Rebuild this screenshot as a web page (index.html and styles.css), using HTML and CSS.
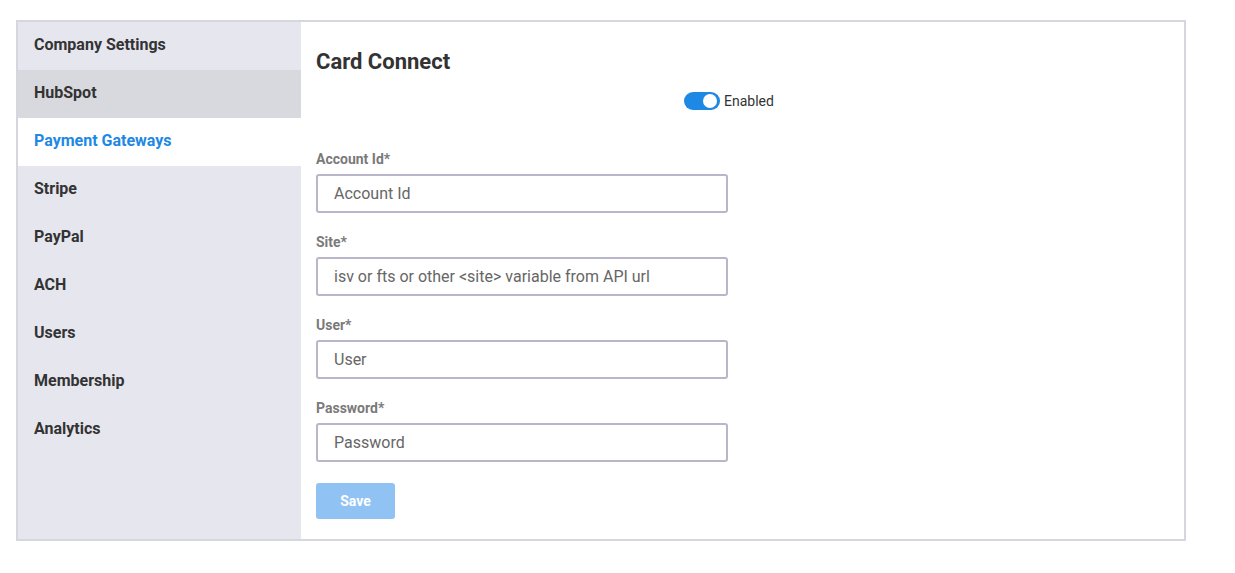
FILE: index.html
```html
<!DOCTYPE html>
<html lang="en">
<head>
	<meta charset="UTF-8">
	<title>Settings - Payment Gateways</title>
	<link rel="stylesheet" href="styles.css">
</head>
<body>
	<div class="settings">
		<ul class="side-nav">
			<li>Company Settings</li>
			<li class="hover">HubSpot</li>
			<li class="active">Payment Gateways</li>
			<li>Stripe</li>
			<li>PayPal</li>
			<li>ACH</li>
			<li>Users</li>
			<li>Membership</li>
			<li>Analytics</li>
		</ul>
		<div class="panel">
			<h2 class="panel-title">Card Connect</h2>
			<label class="switch-row">
				<span class="switch"><span class="knob"></span></span>
				<span class="switch-text">Enabled</span>
			</label>
			<form class="gateway-form">
				<div class="field">
					<label class="field-label">Account Id*</label>
					<input class="field-input" type="text" placeholder="Account Id">
				</div>
				<div class="field">
					<label class="field-label">Site*</label>
					<input class="field-input" type="text" placeholder="isv or fts or other <site> variable from API url">
				</div>
				<div class="field">
					<label class="field-label">User*</label>
					<input class="field-input" type="text" placeholder="User">
				</div>
				<div class="field">
					<label class="field-label">Password*</label>
					<input class="field-input" type="password" placeholder="Password">
				</div>
				<button class="btn-save" type="button" disabled>Save</button>
			</form>
		</div>
	</div>
</body>
</html>
```

FILE: styles.css
```css
body{
	margin: 0;
	padding: 20px 0 0 16px;
	font-family: Roboto, "Liberation Sans", sans-serif;
	color: #333;
	background: #fff;
}
.settings{
	display: flex;
	width: 1166px;
	height: 517px;
	border: 2px solid #d6d6de;
	background: #fff;
}
.side-nav{
	list-style: none;
	margin: 0;
	padding: 0;
	width: 283px;
	background: #e6e6ef;
}
.side-nav li{
	height: 48px;
	line-height: 46px;
	padding-left: 16px;
	font-size: 16px;
	font-weight: 700;
	color: #333;
}
.side-nav li.hover{
	background: #d8d9de;
}
.side-nav li.active{
	background: #fff;
	color: #1e88e5;
}
.panel{
	flex: 1;
	padding: 27px 15px 0;
}
.panel-title{
	margin: 0;
	font-size: 22px;
	line-height: 26px;
	font-weight: 700;
	color: #333;
}
.switch-row{
	display: flex;
	align-items: center;
	gap: 4px;
	margin: 17px 0 0 368px;
	height: 18px;
}
.switch{
	position: relative;
	width: 36px;
	height: 18px;
	border-radius: 9px;
	background: #1e88e5;
}
.knob{
	position: absolute;
	top: 2px;
	right: 3px;
	width: 14px;
	height: 14px;
	border-radius: 50%;
	background: #fff;
}
.switch-text{
	font-size: 14px;
	color: #333;
}
.gateway-form{
	margin-top: 41px;
	width: 412px;
}
.field{
	margin-bottom: 21px;
}
.field-label{
	display: block;
	font-size: 14px;
	line-height: 16px;
	font-weight: 700;
	color: #7a7a7a;
	margin-bottom: 7px;
}
.field-input{
	box-sizing: border-box;
	display: block;
	width: 412px;
	height: 39px;
	padding: 0 16px;
	border: 2px solid #b8b6c8;
	border-radius: 3px;
	font-family: inherit;
	font-size: 16px;
	color: #333;
	outline: none;
}
.field-input::placeholder{
	color: #666;
}
.btn-save{
	width: 79px;
	height: 36px;
	border: none;
	border-radius: 3px;
	background: #90c3f3;
	color: #fff;
	font-family: inherit;
	font-size: 14px;
	font-weight: 700;
}
```
